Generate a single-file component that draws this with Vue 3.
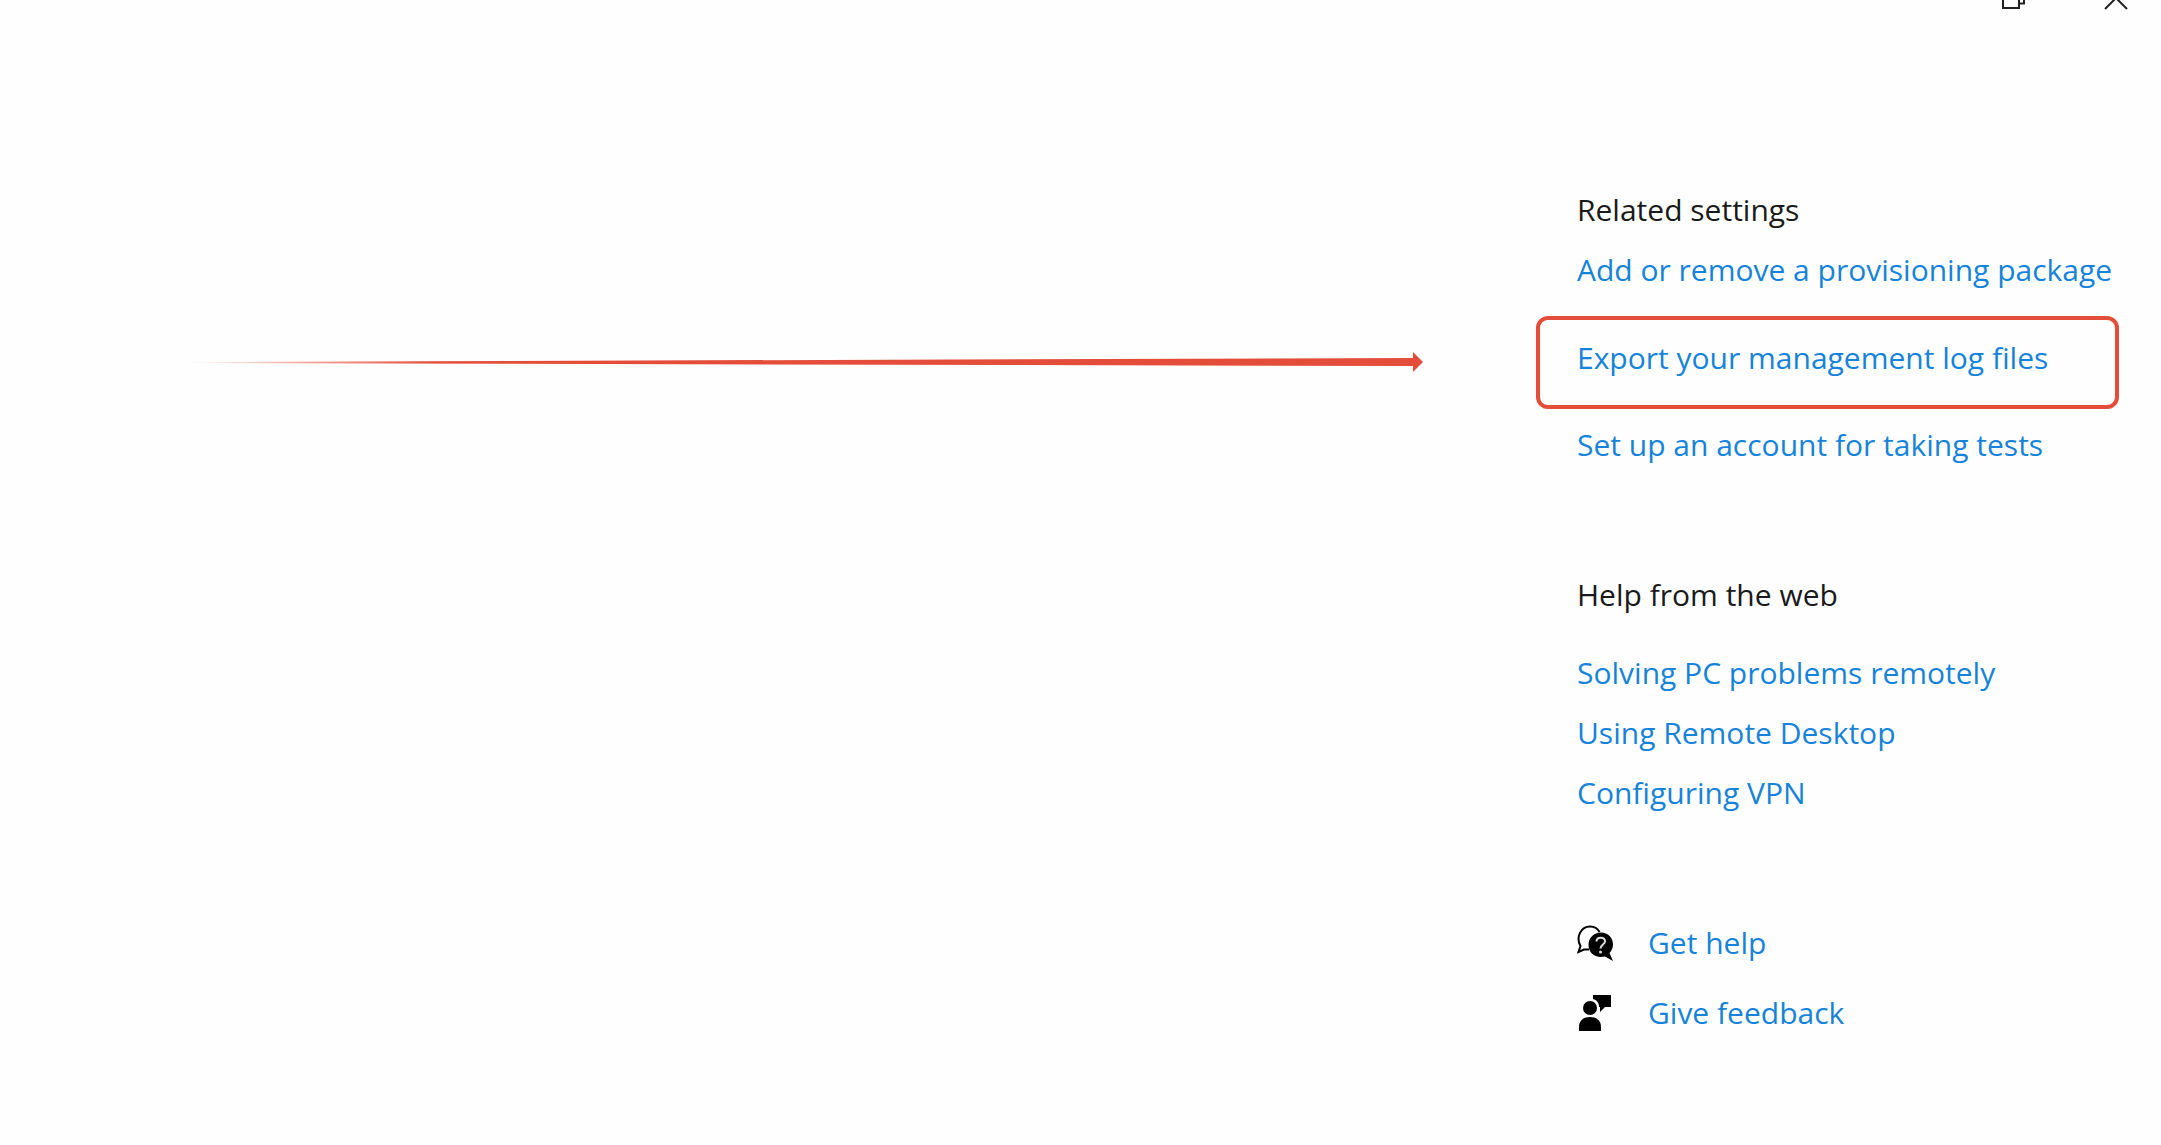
<script setup>
const related = [
  { text: 'Add or remove a provisioning package' },
  { text: 'Export your management log files', marked: true },
  { text: 'Set up an account for taking tests' }
]
const web = ['Solving PC problems remotely', 'Using Remote Desktop', 'Configuring VPN']
</script>

<template>
  <div class="window">
    <header class="titlebar">
      <button type="button" aria-label="Restore">
        <svg width="24" height="10" viewBox="0 0 24 10" fill="none" stroke="#222" stroke-width="2">
          <path d="M2 -9V8H18V-9M18 3.500H23V-9" />
        </svg>
      </button>
      <button type="button" aria-label="Close">
        <svg width="24" height="10" viewBox="0 0 24 10" fill="none" stroke="#222" stroke-width="2">
          <path d="M1 9L23 -13M23 9L1 -13" />
        </svg>
      </button>
    </header>

    <div class="body">
      <main class="content">
        <div class="arrow" aria-hidden="true">
          <svg class="shaft" viewBox="0 0 100 20" preserveAspectRatio="none">
            <defs>
              <linearGradient id="fade">
                <stop offset="0" stop-color="#e44d3a" stop-opacity="0" />
                <stop offset="0.200" stop-color="#e44d3a" />
              </linearGradient>
            </defs>
            <path d="M0 10L100 6V14L0 11Z" fill="url(#fade)" />
          </svg>
          <svg class="head" width="10" height="20" viewBox="0 0 10 20">
            <path d="M0 0L10 10L0 20Z" fill="#e44d3a" />
          </svg>
        </div>
      </main>

      <aside class="side">
        <section>
          <h2>Related settings</h2>
          <ul class="related">
            <li v-for="item in related" :key="item.text" :class="{ marked: item.marked }">
              <a href="#">{{ item.text }}</a>
            </li>
          </ul>
        </section>

        <section>
          <h2>Help from the web</h2>
          <ul class="web">
            <li v-for="text in web" :key="text"><a href="#">{{ text }}</a></li>
          </ul>
        </section>

        <ul class="support">
          <li>
            <svg width="38" height="38" viewBox="0 0 38 38" aria-hidden="true">
              <path d="M12 25.500H7L1.500 28L3.500 22C-1.500 13 4 2.500 13 2.500C18 2.500 21 5 22.500 8" fill="none" stroke="#000" stroke-width="2" />
              <path d="M24 8.500C31 8.500 36 13.500 36 20.500C36 24 34.500 27 32.500 29L36 37L28 32.500C18 34.500 11.500 29 11.500 20.500C11.500 13.500 17 8.500 24 8.500Z" />
              <path d="M19.500 17.500C19.500 12.500 28 12.500 28 17.500C28 20.500 23.500 20.500 23.500 24.500" fill="none" stroke="#ddd" stroke-width="2" />
              <circle cx="23.500" cy="28" r="1.500" fill="#ddd" />
            </svg>
            <a href="#">Get help</a>
          </li>
          <li>
            <svg width="38" height="38" viewBox="0 0 38 38" aria-hidden="true">
              <circle cx="13" cy="14" r="7" />
              <path d="M2 37V33C2 26 7 23 13 23S24 26 24 33V37Z" />
              <path d="M16 1H34V13H28L23 18V13H22C22 9 20 6 16 5Z" />
            </svg>
            <a href="#">Give feedback</a>
          </li>
        </ul>
      </aside>
    </div>
  </div>
</template>

<style>
body {
  margin: 0;
  background: #fefefe;
}
</style>

<style scoped>
.window {
  font-family: "Open Sans", "Noto Sans", sans-serif;
  font-size: 30px;
  line-height: 40px;
  color: #1a1a1a;
}
.titlebar {
  display: flex;
  justify-content: flex-end;
  gap: 79px;
  padding: 0 33px 0 0;
}
.titlebar button {
  display: block;
  padding: 0;
  border: 0;
  background: none;
}
.titlebar svg,
.support svg,
.arrow svg {
  display: block;
}
.body {
  display: flex;
  padding-top: 180px;
}
.content {
  flex: 1;
  min-width: 0;
}
.arrow {
  display: flex;
  margin: 162px 113px 0 190px;
}
.shaft {
  flex: 1;
  min-width: 0;
  height: 20px;
}
.head {
  flex: none;
}
.side {
  box-sizing: border-box;
  flex: none;
  width: 625px;
  padding-left: 41px;
  white-space: nowrap;
}
h2 {
  margin: 0;
  font-size: inherit;
  font-weight: 400;
}
ul {
  margin: 0;
  padding: 0;
  list-style: none;
}
a {
  color: #1683db;
  text-decoration: none;
}
.related {
  margin-top: 20px;
}
.marked {
  margin: 26px 42px 16px -41px;
  padding: 18px 37px 27px;
  border: 4px solid #e44d3a;
  border-radius: 12px;
}
.web {
  display: flex;
  flex-direction: column;
  gap: 20px;
  margin-top: 38px;
}
section {
  margin-bottom: 110px;
}
.support {
  display: flex;
  flex-direction: column;
  gap: 30px;
}
.support li {
  display: flex;
  align-items: center;
  gap: 33px;
}
</style>
